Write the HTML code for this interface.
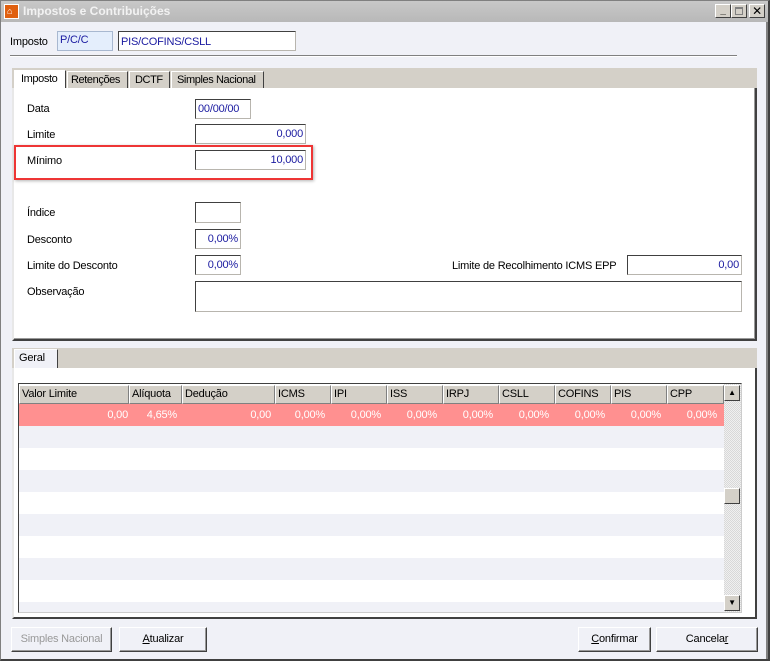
<!DOCTYPE html>
<html><head><meta charset="utf-8"><style>
*{box-sizing:border-box;margin:0;padding:0}
body{width:770px;height:661px;position:relative;background:#f0f1f7;font-family:"Liberation Sans","DejaVu Sans",sans-serif;font-size:11px;color:#000;overflow:hidden;letter-spacing:-0.2px}
div{white-space:nowrap}
.a{position:absolute}
.in{position:absolute;background:#fff;border:1px solid #b8b5ae;border-top-color:#404040;border-left-color:#404040;color:#1a1aa0;text-align:right;padding:3px 2px 0 2px;font-size:11px}
.lbl{position:absolute;font-size:11px}
.btn{position:absolute;background:#f0f1f7;border:1px solid #fff;border-right-color:#404040;border-bottom-color:#404040;box-shadow:inset -1px -1px 0 #999;text-align:center;line-height:22px;font-size:11px}
.th{position:absolute;top:385px;height:19px;background:#d4d0c8;border:1px solid #fff;border-right-color:#808080;border-bottom-color:#808080;padding:2px 2px;font-size:11px}
.td{position:absolute;top:404px;height:22px;line-height:22px;text-align:right;color:#fff;font-size:11px}
.tab{position:absolute;top:71px;height:18px;border:1px solid #fff;border-right:1px solid #404040;padding:2px 3px 0;font-size:11px;letter-spacing:-0.4px;overflow:hidden}
</style></head><body>
<div class="a" style="left:0;top:0;width:770px;height:661px;border:1px solid #808080;border-right:2px solid #404040;border-bottom:2px solid #404040"></div>
<div class="a" style="left:1px;top:1px;width:767px;height:21px;background:linear-gradient(#c8c8c8,#b8b8b8)"></div>
<div class="a" style="left:4px;top:4px;width:15px;height:15px;background:#e06010;border:1px solid #fff"></div>
<div class="a" style="left:7px;top:6px;color:#fff;font-size:9px;font-weight:bold">⌂</div>
<div class="a" style="left:23px;top:4px;color:#f2f2f2;font-weight:bold;font-size:12px;letter-spacing:0">Impostos e Contribuições</div>
<div class="a" style="left:715px;top:4px;width:16px;height:14px;background:#d4d0c8;border:1px solid #fff;border-right-color:#404040;border-bottom-color:#404040;font-size:10px;font-weight:bold;text-align:center;line-height:12px">_</div>
<div class="a" style="left:731px;top:4px;width:16px;height:14px;background:#d4d0c8;border:1px solid #fff;border-right-color:#404040;border-bottom-color:#404040"><div class="a" style="left:3px;top:2px;width:8px;height:8px;border:1px solid #808080;border-top-width:2px"></div></div>
<div class="a" style="left:749px;top:4px;width:16px;height:14px;background:#d4d0c8;border:1px solid #fff;border-right-color:#404040;border-bottom-color:#404040;font-size:12px;font-weight:bold;text-align:center;line-height:12px">✕</div>
<div class="a" style="left:766px;top:22px;width:2px;height:637px;background:#808080"></div>

<div class="lbl" style="left:10px;top:36px">Imposto</div>
<div class="a" style="left:57px;top:31px;width:56px;height:20px;background:#e4eefc;border:1px solid #a8b8d0;color:#1a1aa0;padding:2px 2px">P/C/C</div>
<div class="a" style="left:118px;top:31px;width:178px;height:20px;background:#fff;border:1px solid #b8b5ae;border-top-color:#404040;border-left-color:#404040;color:#1a1aa0;padding:4px 2px 0">PIS/COFINS/CSLL</div>
<div class="a" style="left:10px;top:55px;width:727px;height:2px;border-top:1px solid #808080;border-bottom:1px solid #fff"></div>

<div class="a" style="left:12px;top:68px;width:745px;height:21px;background:#d4d0c8"></div>
<div class="a" style="left:14px;top:70px;width:52px;height:20px;background:#fff;border:1px solid #fff;border-right:1px solid #404040;padding:2px 6px;letter-spacing:-0.4px">Imposto</div>
<div class="tab" style="left:67px;width:61px">Retenções</div>
<div class="tab" style="left:129px;width:41px;padding-left:5px">DCTF</div>
<div class="tab" style="left:171px;width:93px;padding-left:5px">Simples Nacional</div>
<div class="a" style="left:12px;top:88px;width:745px;height:253px;background:#fff;border-left:2px solid #e8e8e8;border-right:2px solid #404040;border-bottom:2px solid #404040;box-shadow:inset -1px -1px 0 #999"></div>

<div class="lbl" style="left:27px;top:103px">Data</div>
<div class="in" style="left:195px;top:99px;width:56px;height:20px;text-align:left">00/00/00</div>
<div class="lbl" style="left:27px;top:129px">Limite</div>
<div class="in" style="left:195px;top:124px;width:111px;height:20px">0,000</div>
<div class="lbl" style="left:27px;top:155px">Mínimo</div>
<div class="in" style="left:195px;top:150px;width:111px;height:20px">10,000</div>
<div class="a" style="left:14px;top:145px;width:299px;height:35px;border:2px solid #ee3535;box-shadow:1px 1px 3px rgba(0,0,0,.3)"></div>
<div class="lbl" style="left:27px;top:207px">Índice</div>
<div class="in" style="left:195px;top:202px;width:46px;height:21px"></div>
<div class="lbl" style="left:27px;top:234px">Desconto</div>
<div class="in" style="left:195px;top:229px;width:46px;height:20px">0,00%</div>
<div class="lbl" style="left:27px;top:260px">Limite do Desconto</div>
<div class="in" style="left:195px;top:255px;width:46px;height:20px">0,00%</div>
<div class="lbl" style="left:452px;top:260px">Limite de Recolhimento ICMS EPP</div>
<div class="in" style="left:627px;top:255px;width:115px;height:20px">0,00</div>
<div class="lbl" style="left:27px;top:286px">Observação</div>
<div class="in" style="left:195px;top:281px;width:547px;height:31px"></div>

<div class="a" style="left:12px;top:348px;width:745px;height:21px;background:#d4d0c8"></div>
<div class="a" style="left:14px;top:349px;width:44px;height:20px;background:#f0f1f7;border:1px solid #fff;border-right:1px solid #404040;padding:2px 4px">Geral</div>
<div class="a" style="left:12px;top:368px;width:745px;height:251px;background:#fff;border-left:2px solid #e8e8e8;border-right:2px solid #404040;border-bottom:2px solid #404040"></div>
<div class="a" style="left:18px;top:383px;width:724px;height:230px;border:1px solid #404040;border-right-color:#ccc;border-bottom-color:#ccc;background:#fff"></div>
<div class="a" style="left:19px;top:426px;width:705px;height:22px;background:#f0f1f7"></div>
<div class="a" style="left:19px;top:470px;width:705px;height:22px;background:#f0f1f7"></div>
<div class="a" style="left:19px;top:514px;width:705px;height:22px;background:#f0f1f7"></div>
<div class="a" style="left:19px;top:558px;width:705px;height:22px;background:#f0f1f7"></div>
<div class="a" style="left:19px;top:602px;width:705px;height:10px;background:#f0f1f7"></div>
<div class="a" style="left:19px;top:404px;width:705px;height:22px;background:#ff9090"></div>
<div class="th" style="left:19px;width:110px">Valor Limite</div>
<div class="th" style="left:129px;width:53px">Alíquota</div>
<div class="th" style="left:182px;width:93px">Dedução</div>
<div class="th" style="left:275px;width:56px">ICMS</div>
<div class="th" style="left:331px;width:56px">IPI</div>
<div class="th" style="left:387px;width:56px">ISS</div>
<div class="th" style="left:443px;width:56px">IRPJ</div>
<div class="th" style="left:499px;width:56px">CSLL</div>
<div class="th" style="left:555px;width:56px">COFINS</div>
<div class="th" style="left:611px;width:56px">PIS</div>
<div class="th" style="left:667px;width:57px">CPP</div>
<div class="td" style="left:19px;width:109px">0,00</div>
<div class="td" style="left:129px;width:48px">4,65%</div>
<div class="td" style="left:182px;width:89px">0,00</div>
<div class="td" style="left:275px;width:50px">0,00%</div>
<div class="td" style="left:331px;width:50px">0,00%</div>
<div class="td" style="left:387px;width:50px">0,00%</div>
<div class="td" style="left:443px;width:50px">0,00%</div>
<div class="td" style="left:499px;width:50px">0,00%</div>
<div class="td" style="left:555px;width:50px">0,00%</div>
<div class="td" style="left:611px;width:50px">0,00%</div>
<div class="td" style="left:667px;width:50px">0,00%</div>
<div class="a" style="left:724px;top:384px;width:17px;height:228px;background:repeating-conic-gradient(#f0f0f0 0 25%,#d8d8d8 0 50%) 0 0/2px 2px"></div>
<div class="a" style="left:724px;top:385px;width:16px;height:16px;background:#d4d0c8;border:1px solid #fff;border-right-color:#404040;border-bottom-color:#404040;font-size:8px;text-align:center;line-height:14px">▲</div>
<div class="a" style="left:724px;top:488px;width:16px;height:16px;background:#d4d0c8;border:1px solid #fff;border-right-color:#404040;border-bottom-color:#404040"></div>
<div class="a" style="left:724px;top:595px;width:16px;height:16px;background:#d4d0c8;border:1px solid #fff;border-right-color:#404040;border-bottom-color:#404040;font-size:8px;text-align:center;line-height:14px">▼</div>

<div class="btn" style="left:11px;top:627px;width:101px;height:25px;color:#999">Simples Nacional</div>
<div class="btn" style="left:119px;top:627px;width:88px;height:25px"><u>A</u>tualizar</div>
<div class="btn" style="left:578px;top:627px;width:73px;height:25px"><u>C</u>onfirmar</div>
<div class="btn" style="left:656px;top:627px;width:102px;height:25px">Cancela<u>r</u></div>
</body></html>
